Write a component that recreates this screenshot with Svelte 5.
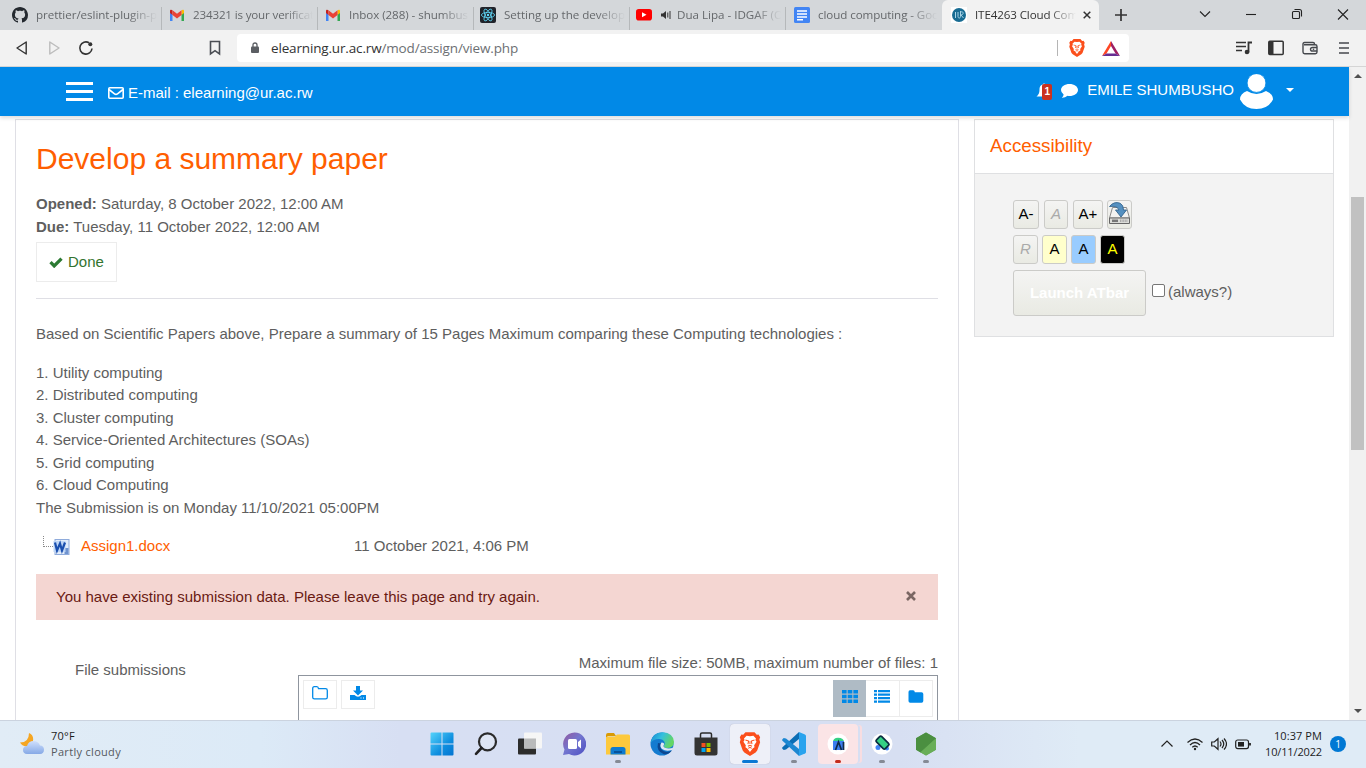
<script>
  const tabs = [
    { icon: 'github', title: 'prettier/eslint-plugin-p', width: 121 },
    { icon: 'gmail', title: '234321 is your verificat', width: 121 },
    { icon: 'gmail', title: 'Inbox (288) - shumbus', width: 119 },
    { icon: 'react', title: 'Setting up the develop', width: 121 },
    { icon: 'youtube', title: 'Dua Lipa - IDGAF (O', width: 106, audio: true },
    { icon: 'docs', title: 'cloud computing - Goo', width: 121 }
  ];

  const topics = [
    '1. Utility computing',
    '2. Distributed computing',
    '3. Cluster computing',
    '4. Service-Oriented Architectures (SOAs)',
    '5. Grid computing',
    '6. Cloud Computing',
    'The Submission is on Monday 11/10/2021 05:00PM'
  ];

  const apps = [
    { name: 'start' }, { name: 'search' }, { name: 'tasks' }, { name: 'chat' },
    { name: 'files', run: true }, { name: 'edge' }, { name: 'store' },
    { name: 'brave', active: true }, { name: 'code', run: true },
    { name: 'studio', alert: true }, { name: 'emulator', run: true }, { name: 'node', run: true }
  ];

  // Spreads the letters of a label so that it fills the given width.
  function fit(node, width) {
    const natural = node.getBoundingClientRect().width;
    node.style.letterSpacing = (width - natural) / node.textContent.length + 'px';
  }
</script>

{#snippet brave()}
  <path d="M5 0h8l2 2.2 1.6-.2 1.4 2.4-.7 2L18 9l-2.6 7.2-1.4 1.7L9 21l-5-3.1-1.4-1.7L0 9l.7-2.6-.7-2L1.4 2 3 2.2z" fill="#fb4f1c" />
  <path d="M9 3.6l3-.5 2.3 2.4-.5 1.3 1 1.7-2.1 3.1.3 1.8-1.6 1L9 17.6 6.6 14.4 5 13.400l.3-1.8-2.1-3.1 1-1.700-.5-1.300L6 3.100z" fill="#fff" />
  <path d="M5 7l2.800.8-.6 2.700M13 7l-2.800.8.6 2.700M7.200 12.500L9 11.600l1.800.9M9 8v2.500M7.500 14.300L9 13.400l1.500.9" fill="none" stroke="#fb4f1c" stroke-width=".9" />
{/snippet}

<div class="screen">
  <div class="tabstrip">
    {#each tabs as tab}
      <div class="tab">
        <svg class="fav" viewBox="0 0 16 16">
          {#if tab.icon === 'github'}
            <path fill="#24292f" d="M8 0C3.58 0 0 3.58 0 8c0 3.54 2.29 6.53 5.47 7.59.4.07.55-.17.55-.38 0-.19-.01-.82-.01-1.49-2.01.37-2.53-.49-2.69-.94-.09-.23-.48-.94-.82-1.13-.28-.15-.68-.52-.01-.53.63-.01 1.08.58 1.23.82.72 1.21 1.87.87 2.33.66.07-.52.28-.87.51-1.07-1.78-.2-3.64-.89-3.64-3.95 0-.87.31-1.59.82-2.15-.08-.2-.36-1.02.08-2.12 0 0 .67-.21 2.2.82.64-.18 1.32-.27 2-.27s1.36.09 2 .27c1.53-1.04 2.2-.82 2.2-.82.44 1.1.16 1.92.08 2.12.51.56.82 1.27.82 2.15 0 3.07-1.87 3.75-3.65 3.95.29.25.54.73.54 1.48 0 1.07-.01 1.93-.01 2.2 0 .21.15.46.55.38A8.01 8.01 0 0 0 16 8c0-4.42-3.58-8-8-8z" />
          {:else if tab.icon === 'gmail'}
            <path fill="#4285f4" d="M1 14h2.500V7.500L1 5z" /><path fill="#34a853" d="M12.500 14H15V5l-2.500 2.500z" />
            <path fill="#fbbc04" d="M12.500 3.500v4.500L15 6V4c0-1.500-1.500-1.800-2.500-.5z" />
            <path fill="#c5221f" d="M1 6l2.500 2V3.500C2.500 2.200 1 2.500 1 4z" /><path fill="#ea4335" d="M3.500 8V3.300L8 6.700l4.500-3.400V8L8 11.400z" />
          {:else if tab.icon === 'react'}
            <rect width="16" height="16" rx="2" fill="#20232a" />
            <g fill="none" stroke="#61dafb" stroke-width=".8"><ellipse cx="8" cy="8" rx="6.600" ry="2.600" /><ellipse cx="8" cy="8" rx="6.600" ry="2.600" transform="rotate(60 8 8)" /><ellipse cx="8" cy="8" rx="6.600" ry="2.600" transform="rotate(120 8 8)" /></g><circle cx="8" cy="8" r="1.200" fill="#61dafb" />
          {:else if tab.icon === 'youtube'}
            <rect y="2" width="16" height="11.500" rx="2.800" fill="#f00" /><path d="M6 5.200v5L10.500 7.700z" fill="#fff" />
          {:else}
            <rect width="16" height="16" rx="1.500" fill="#4285f4" /><path d="M3 4h10M3 7h10M3 10h10M3 12.700h6" stroke="#fff" stroke-width="1.600" />
          {/if}
        </svg>
        {#if tab.audio}
          <svg class="audio" viewBox="0 0 10 10"><path d="M0 3.500h2L5 1v8L2 6.500H0z" fill="#333" /><path d="M6.800 2.500v5M9 1v8" stroke="#333" /></svg>
        {/if}
        <span class="label"><span use:fit={tab.width}>{tab.title}</span></span>
      </div>
    {/each}
    <div class="tab active">
      <svg class="fav" viewBox="0 0 16 16"><rect width="16" height="16" fill="#fff" /><circle cx="8" cy="8" r="7" fill="#176b92" /><path d="M4.500 5v6M7 5v4.500c0 2 2.500 2 2.500 0V4M9.500 5c4-1 3 3 .5 3l2.500 3" fill="none" stroke="#a8d3e6" stroke-width="1" /></svg>
      <span class="label"><span use:fit={103}>ITE4263 Cloud Com</span></span>
      <svg class="tabclose" viewBox="0 0 8 8"><path d="M.7.700l6.600 6.600M7.300.700L.7 7.300" stroke="#333" stroke-width="1.500" /></svg>
    </div>
    <svg class="plus" viewBox="0 0 12 12"><path d="M6 0v12M0 6h12" stroke="#333" stroke-width="1.700" /></svg>
    <div class="winbtns">
      <svg viewBox="0 0 46 30"><path d="M18 11.500l5 5 5-5" /></svg>
      <svg viewBox="0 0 46 30"><path d="M18 14.500h10" /></svg>
      <svg viewBox="0 0 46 30"><rect x="18.500" y="11.500" width="7" height="7" rx="1" /><path d="M20.500 9.500h5q2 0 2 2v5" /></svg>
      <svg viewBox="0 0 46 30"><path d="M18 9.500l10 10M28 9.500l-10 10" /></svg>
    </div>
  </div>

  <div class="toolbar">
    <svg class="nav" viewBox="0 0 16 16"><path d="M12.200 2v12L3 8z" fill="none" stroke="#333" stroke-width="1.400" stroke-linejoin="round" /></svg>
    <svg class="nav" viewBox="0 0 16 16"><path d="M3.800 2v12L13 8z" fill="none" stroke="#bcbcbc" stroke-width="1.400" stroke-linejoin="round" /></svg>
    <svg class="nav" viewBox="0 0 16 16"><path d="M11 2.700A6.100 6.100 0 1 0 14 8.500" fill="none" stroke="#333" stroke-width="1.600" /><circle cx="12.300" cy="4.200" r="2" fill="#333" /></svg>
    <svg class="mark" viewBox="0 0 12 16"><path d="M1.500 1.500h9v12.500L6 10.700 1.500 14z" fill="none" stroke="#4b4e54" stroke-width="1.600" /></svg>
    <div class="address">
      <svg class="lock" viewBox="0 0 8 12"><path d="M2 5V3q0-2 2-2t2 2v2" fill="none" stroke="#5b5e63" stroke-width="1.300" /><rect y="4.500" width="8" height="6.500" rx="1" fill="#5b5e63" /></svg>
      <span class="url"><span use:fit={247}><b>elearning.ur.ac.rw</b>/mod/assign/view.php</span></span>
      <i class="bar"></i>
      <svg class="shield" viewBox="0 0 18 21">{@render brave()}</svg>
      <svg class="bat" viewBox="0 0 18 15"><path d="M9 0L0 15l4.500-2.500L9 5z" fill="#ff4724" /><path d="M9 0l9 15-4.500-2.500L9 5z" fill="#9e1f63" /><path d="M0 15h18l-4.500-2.600h-9z" fill="#662d91" /></svg>
    </div>
    <div class="tools">
      <svg viewBox="0 0 16 16"><path d="M0 2.500h10M0 6.500h10M0 10.500h6" stroke="#333" stroke-width="1.500" /><path d="M12.500 12.500V2.500H16" fill="none" stroke="#333" stroke-width="1.800" /><circle cx="11" cy="12" r="2.300" fill="#333" /></svg>
      <svg viewBox="0 0 16 16"><rect x=".8" y="1.300" width="14.400" height="13.200" rx="1" fill="none" stroke="#333" stroke-width="1.500" /><path d="M1 2h4.500v12H1z" fill="#333" /></svg>
      <svg viewBox="0 0 16 16"><path d="M12.500 4.500V4q0-1.500-1.500-1.500H2.500q-1.500 0-1.500 1.500v8q0 1.700 1.700 1.700h10.600q1.700 0 1.700-1.700V6.500q0-1.700-1.700-1.700H2M15 7.500h-4.500q-2 0-2 1.800t2 1.700H15" fill="none" stroke="#45484d" stroke-width="1.400" /><circle cx="11.500" cy="9.300" r=".8" fill="#45484d" /></svg>
      <svg viewBox="0 0 16 16"><path d="M3 3h10M3 8h10M3 13h10" stroke="#45484d" stroke-width="1.600" /></svg>
    </div>
  </div>

  <div class="viewport">
    <div class="page">
      <header>
        <div class="burger"><i></i><i></i><i></i></div>
        <svg class="mail" viewBox="0 0 16 12"><rect x=".8" y=".8" width="14.400" height="10.400" rx="1" fill="none" stroke="#fff" stroke-width="1.600" /><path d="M1 2.500l5.500 4.300q1.500 1.200 3 0L15 2.500" fill="none" stroke="#fff" stroke-width="1.600" /></svg>
        <span class="email">E-mail : elearning@ur.ac.rw</span>
        <div class="user">
          <div class="bell">
            <svg viewBox="0 0 16 16"><path d="M8 0l1 1.500c3 .5 3.500 3 3.500 5.500 0 3 1 5 3 6.500H.5c2-1.500 3-3.500 3-6.500 0-2.500.5-5 3.500-5.500z" fill="#fff" /></svg>
            <em>1</em>
          </div>
          <svg class="bubble" viewBox="0 0 17 14"><path d="M8.500 0c4.700 0 8.500 2.600 8.500 6s-3.800 6-8.500 6q-1 0-2-.2Q4 14 .8 13.800q1.700-1.300 1.800-3.300Q0 8.700 0 6c0-3.400 3.800-6 8.500-6z" fill="#fff" /></svg>
          <span class="name">EMILE SHUMBUSHO</span>
          <svg class="avatar" viewBox="0 0 33 35"><path d="M7 17Q16.500 23 26 17 33 19.500 33 25.500 28 35 16.500 35T0 25.500Q0 19.500 7 17z" fill="#fff" /><circle cx="16.500" cy="9" r="9.400" fill="#fff" stroke="#0189e7" stroke-width=".8" /></svg>
          <i class="caret"></i>
        </div>
      </header>

      <div class="columns">
        <main>
          <h2>Develop a summary paper</h2>
          <div class="dates">
            <div><b>Opened:</b> Saturday, 8 October 2022, 12:00 AM</div>
            <div><b>Due:</b> Tuesday, 11 October 2022, 12:00 AM</div>
          </div>
          <div class="done">
            <svg viewBox="0 0 14 11"><path d="M1.500 5.200l3.700 3.700L12.500 1.700" fill="none" stroke="#2c7a33" stroke-width="3.300" /></svg>
            Done
          </div>
          <hr />
          <p class="intro">Based on Scientific Papers above, Prepare a summary of 15 Pages Maximum comparing these Computing technologies :</p>
          <div class="topics">
            {#each topics as topic}<div>{topic}</div>{/each}
          </div>
          <div class="attachment">
            <i class="branch"></i>
            <svg viewBox="0 0 16 16"><path d="M1 0h15v16H1z" fill="#8fabdb" /><path d="M2 1h13v14H2z" fill="#e3edfa" /><path d="M11 9h4v6h-4z" fill="#6f93cf" /><path d="M0 2h12v11H0z" fill="#bfd6f5" /><path d="M1.500 3.500l2 8L6.500 4.500l2 7L11.500 3.500" fill="none" stroke="#1b4fae" stroke-width="2.200" /></svg>
            <a>Assign1.docx</a>
            <time>11 October 2021, 4:06 PM</time>
          </div>
          <div class="alert">
            <span>You have existing submission data. Please leave this page and try again.</span>
            <svg viewBox="0 0 10 10"><path d="M1 1l8 8M9 1L1 9" stroke="#7a6663" stroke-width="2.600" /></svg>
          </div>
          <div class="form">
            <span class="flabel">File submissions</span>
            <div class="field">
              <div class="limits">Maximum file size: 50MB, maximum number of files: 1</div>
              <div class="manager">
                <div class="mbtn"><svg viewBox="0 0 16 14"><path d="M.7 2.500Q.7.700 2.300.700h2.500Q6.300.700 6.500 2.700h7q1.800 0 1.800 1.700v6.800q0 1.700-1.700 1.700H2.400Q.7 12.900.7 11.200z" fill="none" stroke="#0189e7" stroke-width="1.300" /></svg></div>
                <div class="mbtn"><svg viewBox="0 0 16 14"><path d="M6 0h4v4.500h3L8 9.500 3 4.500h3z" fill="#0189e7" /><path d="M0 9h4.500Q8 12.500 11.500 9H16v5H0z" fill="#0189e7" /><path d="M10.500 12h1M13 12h1" stroke="#fff" /></svg></div>
                <div class="views">
                  <div class="on"><svg viewBox="0 0 16 13"><path d="M0 0h4.600v3.500H0zM5.700 0h4.600v3.500H5.700zM11.400 0H16v3.500h-4.600zM0 4.700h4.600v3.500H0zM5.700 4.700h4.600v3.500H5.700zM11.400 4.700H16v3.500h-4.600zM0 9.400h4.600v3.500H0zM5.700 9.400h4.600v3.500H5.700zM11.400 9.400H16v3.500h-4.600z" fill="#0189e7" /></svg></div>
                  <div><svg viewBox="0 0 16 13"><path d="M0 1.200h3M4 1.200h12M0 4.700h3M4 4.700h12M0 8.200h3M4 8.200h12M0 11.700h3M4 11.700h12" stroke="#0189e7" stroke-width="2.200" /></svg></div>
                  <div><svg viewBox="0 0 16 13"><path d="M.500 2Q.5.300 2 .3h3Q6.800.300 6.800 2.300h6.700q1.800 0 1.800 1.700v7q0 1.700-1.700 1.700H2.200Q.5 12.700.5 11z" fill="#0189e7" /></svg></div>
                </div>
              </div>
            </div>
          </div>
        </main>

        <aside>
          <h5>Accessibility</h5>
          <div class="block">
            <div class="row">
              <span class="btn w26">A-</span><span class="btn off w24 gap5">A</span><span class="btn w30 gap5">A+</span>
              <span class="btn w25 gap4"><svg viewBox="0 0 23 23"><path d="M4.500 5.500h14L21.500 16h-20z" fill="#f3f3f1" stroke="#8a8a8a" /><path d="M1.500 16h20v5.500h-20z" fill="#dcddd9" stroke="#666" /><path d="M4 18.800h6" stroke="#777" stroke-width="2.500" /><path d="M12 18.800h8" stroke="#aaa" stroke-width="2.500" stroke-dasharray="1 .6" /><path d="M1.500 4.500Q6-1 12 1.200q3.500 1.500 3.500 6.800h3L13 15 7.500 8H11Q9.500 3.500 1.500 4.500z" fill="#5590c0" stroke="#33648f" stroke-width=".9" /></svg></span>
            </div>
            <div class="row">
              <span class="btn off w25">R</span><span class="btn w25 gap4 yellow">A</span><span class="btn w25 gap4 blue">A</span><span class="btn w25 gap4 black">A</span>
            </div>
            <div class="row">
              <span class="launch">Launch ATbar</span><i class="check"></i><span class="always">(always?)</span>
            </div>
          </div>
        </aside>
      </div>
    </div>
    <div class="scroll"><i class="up"></i><div class="thumb"></div><i class="down"></i></div>
  </div>

  <footer>
    <svg class="weather" viewBox="0 0 24 24">
      <defs><linearGradient id="cl" x1="0" y1="0" x2="0" y2="1"><stop offset="0" stop-color="#cfdffc" /><stop offset="1" stop-color="#86a9e6" /></linearGradient></defs>
      <path d="M9 1q4 1.500 4.200 6.200Q13 14 6 14.500 2 14 0 10.500 9 10.500 9 1z" fill="#f5a623" /><path d="M7 22q-4-.3-4-4t4-4q1.500-5 6.500-5T20 13.500q4 .3 4 4.200T20 22z" fill="url(#cl)" />
    </svg>
    <div class="temp"><div><span use:fit={24}>70°F</span></div><div class="dim"><span use:fit={70}>Partly cloudy</span></div></div>
    <div class="apps">
      {#each apps as app}
        <div class="app" class:focus={app.active} class:warn={app.alert}>
          <svg viewBox="0 0 24 24">
            {#if app.name === 'start'}
              <defs><linearGradient id="wn" x1="0" y1="0" x2="1" y2="1"><stop offset="0" stop-color="#54d3fb" /><stop offset=".6" stop-color="#0f8fdf" /><stop offset="1" stop-color="#0374d1" /></linearGradient></defs>
              <path d="M.5 1.500q0-1 1-1h10v11H.5zM12.500.5h10q1 0 1 1v10h-11zM.5 12.500h11v11h-10q-1 0-1-1zM12.500 12.500h11v10q0 1-1 1h-10z" fill="url(#wn)" />
            {:else if app.name === 'search'}
              <circle cx="13.500" cy="9.800" r="8.500" fill="#dfe6f4" stroke="#2b2b2b" stroke-width="2.200" /><path d="M7.500 16L2 21.800" stroke="#222" stroke-width="2.600" stroke-linecap="round" />
            {:else if app.name === 'tasks'}
              <rect x="0" y="6.500" width="18" height="16" rx="1" fill="#2c2c2c" /><rect x="6" y=".5" width="18" height="16" rx="1" fill="#f6f6f6" /><path d="M6 6.500h12v10H6z" fill="#b9babb" />
            {:else if app.name === 'chat'}
              <defs><linearGradient id="ch" x1="0" y1="0" x2="1" y2="1"><stop offset="0" stop-color="#94589e" /><stop offset=".45" stop-color="#7376cf" /><stop offset="1" stop-color="#4c4fc3" /></linearGradient></defs>
              <path d="M12.500.500a11.500 11.500 0 1 1-5.500 21.500L1 23l1.500-5.500A11.500 11.500 0 0 1 12.500.500z" fill="url(#ch)" /><rect x="6" y="7" width="9" height="10" rx="1.500" fill="#fff" /><path d="M16 10l3-2.500v9L16 14z" fill="#fff" />
            {:else if app.name === 'files'}
              <path d="M0 3q0-2 2-2h6l2 3h-8L0 6z" fill="#d99a04" /><path d="M0 6q0-1.500 1.500-1.500H9L11 2.500h11.500Q24 2.500 24 4v18.500H0z" fill="#fdc93d" /><path d="M4.500 17.500q0-2.500 2.500-2.500h10q2.500 0 2.500 2.500v5h-15z" fill="#0e7bd0" /><path d="M8 20h8" stroke="#07539b" stroke-width="2" />
            {:else if app.name === 'edge'}
              <defs><linearGradient id="eg" x1="0" y1="0" x2="1" y2=".4"><stop offset="0" stop-color="#1686d2" /><stop offset=".5" stop-color="#34c0df" /><stop offset="1" stop-color="#64d663" /></linearGradient></defs>
              <circle cx="12" cy="12" r="11.500" fill="#147bd0" /><path d="M.7 11Q2 .3 12.500.300 23.500 1 24 10q-.5 6-7 6-3.500 0-3.200-2.500 1.700-1 .7-3.500-1.500-3-5.500-3Q3 7 .7 11z" fill="url(#eg)" /><path d="M8 11q-2 8 5.500 11 5 1 8.500-3.500-7 3.500-11-1.500-1.500-2.500 0-5.500z" fill="#0c4791" /><path d="M11.500 10.500Q9 14 12 17q4 3 10 1l1.500-2.500Q19 17.300 15 15.800q-2.300-1-1.200-2.800 1.500-2-2.300-2.500z" fill="#dfe6f4" />
            {:else if app.name === 'store'}
              <path d="M6.500 6V2.500Q6.500 1 8 1h8q1.500 0 1.500 1.500V6" fill="none" stroke="#2c2c2c" stroke-width="1.500" /><path d="M.500 5.500h23V21q0 2.500-2.500 2.500H3Q.5 23.500.5 21z" fill="#333" /><path d="M7.500 11h4v4h-4z" fill="#f25022" /><path d="M12.500 11h4v4h-4z" fill="#7fba00" /><path d="M7.500 16h4v4h-4z" fill="#00a4ef" /><path d="M12.500 16h4v4h-4z" fill="#ffb900" />
            {:else if app.name === 'brave'}
              <g transform="translate(1.800 .2) scale(1.130)">{@render brave()}</g>
            {:else if app.name === 'code'}
              <path d="M17 0v7L4 17.500 1.700 18 .2 16.500v-1z" fill="#0a6db5" /><path d="M17 24v-7L4 6.500 1.700 6 .2 7.500v1z" fill="#1c87d2" /><path d="M17 0v24l6-2.500q1-.5 1-1.500V4q0-1-1-1.500z" fill="#29a3ee" />
            {:else if app.name === 'studio'}
              <circle cx="12" cy="12" r="10.500" fill="#fff" /><path d="M7 10q0-4 5-4.200Q18 6 18 10z" fill="#35d184" /><path d="M7 9h11v9H7z" fill="#3c7df0" /><path d="M9.500 18l3-8 3 8M17.500 10v8" fill="none" stroke="#102b4a" stroke-width="1.700" />
            {:else if app.name === 'emulator'}
              <circle cx="12" cy="12" r="10.500" fill="#fff" /><circle cx="8" cy="15.500" r="2.500" fill="#4285f4" /><circle cx="17" cy="16.500" r="2" fill="#4285f4" /><rect x="9" y="4.500" width="7.500" height="12.500" rx="1.500" transform="rotate(-45 12.500 11)" fill="#35d184" stroke="#0b2d42" stroke-width="1.700" />
            {:else}
              <path d="M12 .5l10 5.800v11.500L12 23.500 2 17.800V6.300z" fill="#5a9e4b" /><path d="M12 .5l10 5.800L6.500 20.400 2 17.800V6.300z" fill="#4b8f40" /><path d="M22 6.300v11.500L12 23.500l-5.500-3.200z" fill="#69ae58" />
            {/if}
          </svg>
          {#if app.run || app.active || app.alert}<i class="ind"></i>{/if}
        </div>
      {/each}
    </div>
    <div class="tray">
      <svg viewBox="0 0 16 16"><path d="M2.500 10.500L8 5l5.500 5.500" /></svg>
      <svg viewBox="0 0 16 16"><path d="M.5 6.500q7.500-7 15 0M3 9q5-5 10 0M5.300 11.300q2.700-2.600 5.400 0" /><circle cx="8" cy="13" r="1.200" fill="#222" stroke="none" /></svg>
      <svg viewBox="0 0 16 16"><path d="M.7 6h2.600L7 2.700v10.600L3.300 10H.7zM9 5.500q2 2.500 0 5M11 4q3.500 4 0 8M13 2.500q5 5.500 0 11" /></svg>
      <svg viewBox="0 0 16 16"><rect x=".7" y="4" width="12.800" height="8.600" rx="2" /><path d="M3 6h6v4.600H3z" fill="#222" stroke="none" /><path d="M15 7v2.500" stroke-width="1.800" /></svg>
    </div>
    <div class="clock"><div><span use:fit={48}>10:37 PM</span></div><div><span use:fit={57}>10/11/2022</span></div></div>
    <span class="count">1</span>
  </footer>
</div>

<style>
  :global(body) { margin: 0; overflow: hidden; }
  * { box-sizing: border-box; }
  svg { flex: none; display: block; }
  .screen { width: 1366px; height: 768px; display: flex; flex-direction: column; overflow: hidden; background: #fff; color: #5e5e5e; font: 15px/22.5px "Liberation Sans", Arial, sans-serif; }
  .tabstrip { height: 30px; flex: none; display: flex; background: #d4d7da; font: 11.600px/30px "Open Sans", sans-serif; color: #65686b; white-space: nowrap; padding-left: 6px; }
  .tab { width: 156px; height: 30px; padding-left: 6px; display: flex; align-items: center; position: relative; }
  .tab:not(.active)::after { content: ''; position: absolute; right: 0; top: 7px; bottom: 0; width: 1px; background: #b5b8ba; }
  .tab:nth-child(6)::after { display: none; }
  .tab:nth-child(2), .tab:nth-child(3) { padding-left: 7px; }
  .tab:nth-child(6) { padding-left: 8px; }
  .fav { width: 16px; height: 16px; margin-right: 8px; }
  .audio { width: 10px; height: 10px; margin: 0 6px 0 1px; }
  .label { flex: 1; overflow: hidden; margin-right: 5px; mask-image: linear-gradient(90deg, #000 calc(100% - 28px), transparent); }
  .label span, .url > span, .temp span, .clock span { display: inline-block; }
  .tab.active { width: 157px; background: #f2f2f2; color: #333; border-radius: 6px 6px 0 0; padding-left: 9px; }
  .active .label { margin-right: 7px; }
  .tabclose { width: 8px; height: 8px; margin-right: 8px; }
  .plus { width: 12px; height: 12px; margin: 9px 0 0 16px; }
  .winbtns { display: flex; margin-left: auto; }
  .winbtns svg { width: 46px; height: 30px; fill: none; stroke: #222; stroke-width: 1.100; }
  .toolbar { height: 37px; flex: none; background: #f2f2f2; border-bottom: 1px solid #d5d5d5; display: flex; align-items: center; padding-left: 14px; }
  .nav { width: 16px; height: 16px; margin-right: 16px; }
  .mark { width: 12px; height: 16px; margin-left: 99px; }
  .address { width: 892px; height: 28px; margin-left: 16px; background: #fff; border-radius: 4px; display: flex; align-items: center; padding-left: 14px; }
  .lock { width: 8px; height: 12px; }
  .url { margin-left: 12px; width: 786px; font: 13.500px/28px "Open Sans", sans-serif; color: #6c6f73; white-space: nowrap; }
  .url b { font-weight: 400; color: #333; }
  .bar { width: 1px; height: 16px; background: #b5b5b5; }
  .shield { width: 16px; height: 18px; margin-left: 11px; }
  .bat { width: 18px; height: 15px; margin-left: 17px; }
  .tools { display: flex; gap: 18px; margin-left: 107px; }
  .tools svg { width: 16px; height: 16px; }
  .tools svg:nth-child(2) { margin-left: -2px; }
  .viewport { flex: 1; min-height: 0; display: flex; overflow: hidden; }
  .page { width: 1349px; display: flex; flex-direction: column; }
  header { height: 49px; flex: none; background: #0189e7; box-shadow: 0 2px 4px rgba(0, 0, 0, .14); z-index: 1; color: #fff; display: flex; align-items: center; padding-left: 66px; }
  .burger { width: 27px; display: flex; flex-direction: column; gap: 5px; }
  .burger i { height: 3px; background: #fff; }
  .mail { width: 16px; height: 12px; margin: 2px 4px 0 15px; }
  .email { margin-top: 3px; white-space: nowrap; }
  .user { display: flex; align-items: center; margin: 0 54px 0 auto; }
  .bell { position: relative; width: 16px; height: 16px; }
  .bell svg { width: 16px; height: 16px; margin-top: -1px; }
  .bell em { position: absolute; left: 6px; top: 0; width: 10px; height: 16px; border-radius: 2px; background: #ca3120; font: bold 10px/16px "Liberation Sans", sans-serif; text-align: center; }
  .bubble { width: 17px; height: 14px; margin: -2px 9px 0 9px; }
  .name { white-space: nowrap; margin-top: -3px; }
  .avatar { width: 33px; height: 35px; margin-left: 6px; }
  .caret { border: 4.500px solid transparent; border-top-color: #fff; border-bottom: 0; margin: -4px 1px 0 13px; }
  .columns { display: flex; align-items: flex-start; padding: 3px 0 0 15px; }
  main { width: 944px; height: 620px; border: 1px solid #dfdfe5; padding: 21px 20px 0; }
  h2 { margin: 0; height: 51px; font-weight: 400; font-size: 30px; line-height: 36px; color: #ff5e00; }
  .dates { height: 50px; line-height: 23px; }
  .done { width: 81px; height: 40px; border: 1px solid #ececec; display: flex; align-items: center; gap: 5px; padding-left: 12px; color: #33742f; }
  .done svg { width: 14px; height: 11px; }
  hr { border: 0; height: 1px; margin: 16px 0 24px; background: #dfdfe5; }
  .intro { margin: 0 0 16px; }
  .topics { height: 157.500px; }
  .attachment { height: 55px; display: flex; align-items: center; padding-left: 7px; }
  .branch { width: 10px; height: 11px; border-left: 1px dotted #888; border-bottom: 1px dotted #888; margin-top: -10px; }
  .attachment svg { width: 17px; height: 16px; margin: 0 11px 0 0; }
  .attachment a { width: 273px; color: #ff5e00; }
  .alert { height: 46px; background: #f4d6d2; padding: 0 22px 0 20px; display: flex; justify-content: space-between; align-items: center; }
  .alert span { color: #6a1a13; }
  .alert svg { width: 10px; height: 10px; margin-top: -3px; }
  .form { display: flex; padding-top: 32px; }
  .flabel { width: 262px; padding: 7px 0 0 39px; }
  .field { width: 640px; }
  .limits { height: 23px; text-align: right; }
  .manager { height: 70px; border: 1px solid #8f959e; display: flex; padding: 4px; }
  .mbtn { width: 34px; height: 29px; border: 1px solid #ececec; margin-right: 4px; padding: 5px 0 0 8px; }
  .mbtn svg { width: 16px; height: 14px; }
  .views { margin-left: auto; display: flex; }
  .views div { width: 33.500px; height: 37px; border: 1px solid #ececec; border-left: 0; display: flex; align-items: center; justify-content: center; }
  .views .on { width: 33px; background: #afbbc5; border: 0; }
  .views svg { width: 16px; height: 13px; margin-top: -4px; }
  .views .on svg { margin: -4px 0 0 1px; }
  aside { width: 360px; height: 218px; margin-left: 15px; border: 1px solid #dfe0e2; background: #f3f3f3; }
  h5 { margin: 0; height: 54px; background: #fff; border-bottom: 1px solid #dfe0e2; color: #ff5e00; font-weight: 400; font-size: 18.750px; line-height: 51px; padding-left: 15px; }
  .block { padding: 26px 0 0 38px; display: flex; flex-direction: column; gap: 6px; }
  .row { display: flex; }
  .btn { height: 29px; border: 1px solid #cbcbc8; border-radius: 3px; background: linear-gradient(#f4f4f3, #e9eae3); color: #000; display: flex; align-items: center; justify-content: center; }
  .btn svg { width: 23px; height: 23px; margin-top: -2px; }
  .w24 { width: 24px; } .w25 { width: 25px; } .w26 { width: 26px; } .w30 { width: 30px; }
  .gap4 { margin-left: 4px; } .gap5 { margin-left: 5px; }
  .off { color: #aaa; font-style: italic; }
  .yellow { background: #ffc; } .blue { background: #9cf; } .black { background: #000; color: #ff0; }
  .launch { width: 133px; height: 46px; border: 1px solid #cbcbc8; border-radius: 3px; background: linear-gradient(#f4f4f3, #e9eae3); color: #fff; font-weight: bold; text-align: center; line-height: 43px; }
  .check { width: 13px; height: 13px; border: 1px solid #767676; border-radius: 2px; background: #fff; margin: 14px 3px 0 6px; }
  .always { margin-top: 11px; }
  .scroll { width: 17px; background: #f1f1f1; display: flex; flex-direction: column; align-items: center; }
  .up, .down { border: 4px solid transparent; }
  .up { border-bottom: 4px solid #505050; border-top: 0; margin: 7px 0 119px; }
  .thumb { width: 13px; height: 253px; background: #c1c1c1; }
  .down { border-top: 4px solid #505050; border-bottom: 0; margin: auto 0 7px; }
  footer { height: 48px; flex: none; border-top: 1px solid #cbd3df; padding-bottom: 1px; background: linear-gradient(90deg, #e1ecf6, #dceaf7 260px, #d7dff3 400px, #d7dff2 900px, #dfebf6 1080px); display: flex; align-items: center; color: #1c1c1c; font: 11px/16px "Open Sans", sans-serif; white-space: nowrap; }
  .weather { width: 24px; height: 24px; margin-left: 20px; }
  .temp { width: 375.500px; padding-left: 7px; }
  .dim { color: #55595e; }
  .apps { display: flex; }
  .app { width: 40px; height: 40px; margin: 0 2.040px; border-radius: 4px; display: flex; align-items: center; justify-content: center; position: relative; }
  .app svg { width: 24px; height: 24px; }
  .focus { background: #eef0f8; box-shadow: 0 0 1px #aab; }
  .warn { background: #fbe4e6; box-shadow: 3px 0 0 -1px #d7dff2, 5px 0 0 -1px #f8dde1; }
  .ind { position: absolute; bottom: 1px; left: 17px; width: 6px; height: 3px; border-radius: 2px; background: #858a95; }
  .focus .ind { left: 12px; width: 16px; background: #0b78d4; }
  .warn .ind { background: #c42b1c; }
  .tray { display: flex; gap: 8px; margin-left: auto; }
  .tray svg { width: 16px; height: 16px; fill: none; stroke: #222; stroke-width: 1.200; }
  .tray svg:first-child { margin-right: 4px; }
  .clock { width: 71px; text-align: right; }
  .count { width: 16px; height: 16px; border-radius: 50%; background: #0078d4; color: #fff; text-align: center; font-size: 10px; line-height: 16px; margin: 0 20px 0 8px; }
</style>
